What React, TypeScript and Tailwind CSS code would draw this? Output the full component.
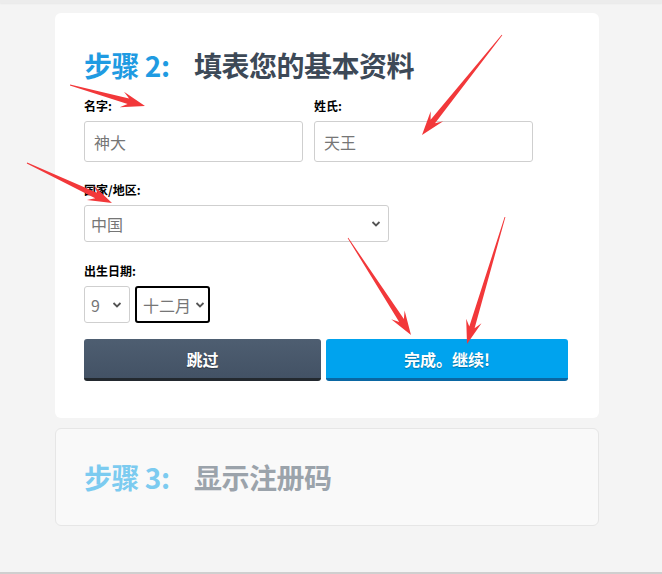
import React from "react";

const font = { fontFamily: '"Noto Sans CJK SC", "Noto Sans", sans-serif' };

type Pt = [number, number];

const Arrow = ({ from, to }: { from: Pt; to: Pt }) => {
  const [sx, sy] = from;
  const [tx, ty] = to;
  const len = Math.hypot(tx - sx, ty - sy);
  const dx = (tx - sx) / len;
  const dy = (ty - sy) / len;
  const nx = -dy;
  const ny = dx;
  const H = 24;
  const W = 8;
  const bx = tx - dx * H;
  const by = ty - dy * H;
  const jx = tx - dx * H * 0.72;
  const jy = ty - dy * H * 0.72;
  const p = (x: number, y: number) => `${x.toFixed(1)},${y.toFixed(1)}`;
  const pts = [
    p(sx + nx * 0.4, sy + ny * 0.4),
    p(jx + nx * 2.8, jy + ny * 2.8),
    p(bx + nx * W, by + ny * W),
    p(tx, ty),
    p(bx - nx * W, by - ny * W),
    p(jx - nx * 2.8, jy - ny * 2.8),
    p(sx - nx * 0.4, sy - ny * 0.4),
  ].join(" ");
  return <polygon points={pts} fill="#f2383a" />;
};

const Label = ({ children }: { children: React.ReactNode }) => (
  <div className="text-[12px] font-bold text-black leading-none mb-[9px]">{children}</div>
);

const Chevron = ({ right = "right-[7px]" }: { right?: string }) => (
  <svg width="10" height="7" viewBox="0 0 10 7" className={`absolute ${right} top-1/2 -translate-y-1/2`}>
    <path d="M1.5 1.5 L5 5 L8.5 1.5" fill="none" stroke="#555" strokeWidth="1.8" />
  </svg>
);

export default function App() {
  return (
    <div className="relative w-[662px] h-[574px] bg-[#f4f4f4] flex flex-col overflow-hidden" style={font}>
      <div className="h-[3px] bg-[#ececec] shadow-[0_1px_2px_rgba(0,0,0,0.05)]" />

      <div className="mt-[10px] ml-[55px] w-[544px] bg-white rounded-[6px] pl-[29px] pt-[38px] pb-[37px]">
        <h2 className="text-[28px] font-bold leading-none tracking-[-0.5px] flex">
          <span className="text-[#1f9be2] w-[110px]">步骤 2:</span>
          <span className="text-[#3d4957]">填表您的基本资料</span>
        </h2>

        <div className="flex gap-[11px] mt-[21px]">
          <div className="w-[219px]">
            <Label>名字:</Label>
            <div className="h-[41px] border border-[#cfcfcf] rounded-[3px] flex items-center pl-[9px] text-[16px] text-[#767676]">
              神大
            </div>
          </div>
          <div className="w-[219px]">
            <Label>姓氏:</Label>
            <div className="h-[41px] border border-[#cfcfcf] rounded-[3px] flex items-center pl-[9px] text-[16px] text-[#767676]">
              天王
            </div>
          </div>
        </div>

        <div className="mt-[22px]">
          <Label>国家/地区:</Label>
          <div className="relative w-[305px] h-[37px] border border-[#cfcfcf] rounded-[3px] flex items-center pl-[6px] text-[16px] text-[#767676]">
            中国
            <Chevron />
          </div>
        </div>

        <div className="mt-[23px]">
          <Label>出生日期:</Label>
          <div className="flex gap-[5px]">
            <div className="relative w-[46px] h-[37px] border border-[#cfcfcf] rounded-[3px] flex items-center pl-[6px] text-[16px] text-[#767676]">
              9
              <Chevron />
            </div>
            <div className="relative w-[75px] h-[37px] border-2 border-black rounded-[3px] flex items-center pl-[6px] text-[16px] text-[#767676]">
              十二月
              <Chevron right="right-[3px]" />
            </div>
          </div>
        </div>

        <div className="flex gap-[5px] mt-[16px]">
          <button className="w-[237px] h-[42px] rounded-[3px] bg-gradient-to-b from-[#4e5e71] to-[#435265] border-b-[3px] border-[#23292f] text-white text-[16px] font-bold [text-shadow:0_1px_1px_rgba(0,0,0,0.4)]">
            跳过
          </button>
          <button className="w-[242px] h-[42px] rounded-[3px] bg-[#00a3ee] border-b-[3px] border-[#0a67a3] text-white text-[16px] font-bold [text-shadow:0_1px_1px_rgba(0,0,0,0.3)]">
            完成。继续!
          </button>
        </div>
      </div>

      <div className="mt-[10px] ml-[55px] w-[544px] h-[98px] bg-[#f9f9f9] border border-[#e6e6e6] rounded-[6px] pl-[28px] flex items-center">
        <h2 className="text-[28px] font-bold leading-none tracking-[-0.5px] flex">
          <span className="text-[#7ccbf0] w-[110px]">步骤 3:</span>
          <span className="text-[#9ba3ab]">显示注册码</span>
        </h2>
      </div>

      <div className="mt-auto h-[2px] bg-[#cfcfcf]" />

      <svg className="absolute inset-0 pointer-events-none" width="662" height="574">
        <Arrow from={[70, 85]} to={[145, 106]} />
        <Arrow from={[502, 35]} to={[422, 135]} />
        <Arrow from={[27, 163]} to={[112, 203]} />
        <Arrow from={[348, 238]} to={[411, 335]} />
        <Arrow from={[505, 217]} to={[467, 344]} />
      </svg>
    </div>
  );
}
